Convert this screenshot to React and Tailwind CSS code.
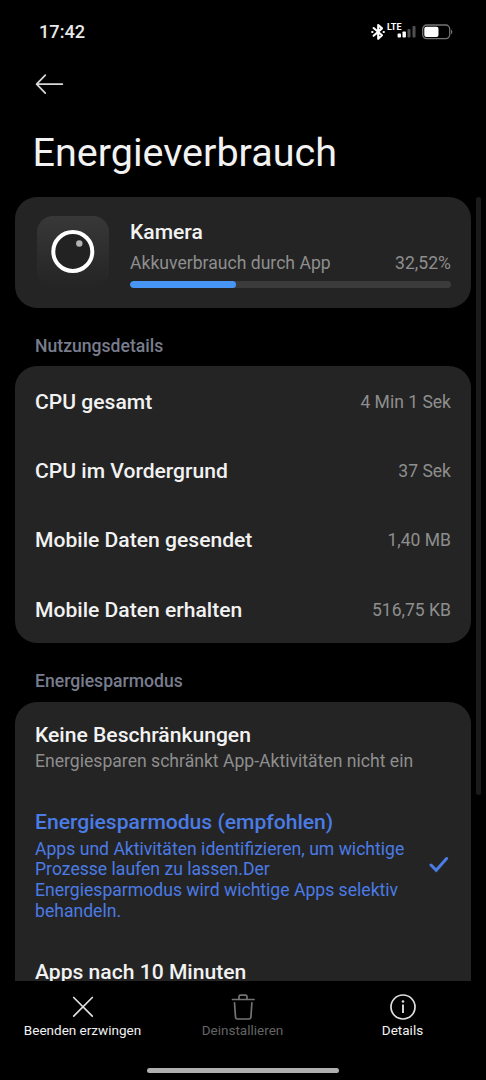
import React from "react";

const usage = [
  ["CPU gesamt", "4 Min 1 Sek"],
  ["CPU im Vordergrund", "37 Sek"],
  ["Mobile Daten gesendet", "1,40 MB"],
  ["Mobile Daten erhalten", "516,75 KB"],
];

function StatusBar() {
  return (
    <header className="flex h-[62px] shrink-0 items-center justify-between pl-[39px] pr-[33px]">
      <span className="pt-[2px] text-[18.2px] leading-none font-medium text-[#e8e8e8]">17:42</span>
      <div className="flex items-center pt-px">
        <svg width="14" height="18" viewBox="0 0 14 18" fill="none" stroke="#fff" strokeWidth="2.1" strokeLinejoin="round" strokeLinecap="round">
          <path d="M2.6 5 L11 12.2 L7.2 15.8 V2 L11 5.4 L2.6 12.8" />
          <path d="M1.2 9h.3M12.6 9h.3" />
        </svg>
        <div className="ml-[2.5px] flex h-[18px] w-[29px] items-start">
          <span className="w-[15px] shrink-0 text-[9px] leading-[9px] font-bold text-white">LTE</span>
          <svg className="-ml-[5px] mt-[2px] shrink-0" width="19" height="13" viewBox="0 0 19 13">
            <rect x="0.6" y="8.6" width="3.4" height="4" rx="0.8" fill="#fff" />
            <rect x="5.5" y="6.5" width="3.4" height="6.1" rx="0.8" fill="#fff" />
            <rect x="10.5" y="4" width="3" height="8.6" rx="0.8" fill="#505050" />
            <rect x="15.5" y="1" width="3" height="11.6" rx="0.8" fill="#505050" />
          </svg>
        </div>
        <svg className="ml-[6px]" width="31" height="16" viewBox="0 0 31 16">
          <rect x="0.7" y="1" width="27" height="13.6" rx="4" fill="none" stroke="#747474" strokeWidth="1.3" />
          <rect x="2.3" y="2.7" width="14.2" height="10.2" rx="2" fill="#fff" />
          <path d="M29 5.5c1.8.8 1.8 4 0 4.8z" fill="#747474" />
        </svg>
      </div>
    </header>
  );
}

function SectionLabel({ children }) {
  return <h2 className="h-[58.5px] pt-[28px] pl-[20px] text-[17.6px] leading-[20px] font-medium text-[#787d8e]">{children}</h2>;
}

function Action({ label, dim, children }) {
  return (
    <button className={dim ? "flex w-[160px] flex-col items-center text-[#646464]" : "flex w-[160px] flex-col items-center text-[#f2f2f2]"}>
      <svg width="28" height="28" viewBox="0 0 28 28" fill="none" stroke={dim ? "#747474" : "#e0e0e0"} strokeWidth="1.7" strokeLinecap="round" strokeLinejoin="round">
        {children}
      </svg>
      <span className="text-[13.5px] leading-[18px] whitespace-nowrap">{label}</span>
    </button>
  );
}

export default function App() {
  return (
    <div className="flex h-[1080px] w-[486px] flex-col overflow-hidden bg-black font-[Roboto,sans-serif] text-[#f2f2f2]">
      <StatusBar />
      <div className="flex h-[44px] shrink-0 items-center pl-[35px]">
        <svg width="29" height="22" viewBox="0 0 29 22" fill="none" stroke="#d8d8d8" strokeWidth="1.7" strokeLinecap="round" strokeLinejoin="round">
          <path d="M27.3 11.2H1.6M10.3 2.2 1.6 11.2l8.7 9" />
        </svg>
      </div>
      <h1 className="h-[91px] shrink-0 pt-[23px] pl-[32.5px] text-[39.5px] leading-[48px] whitespace-nowrap">Energieverbrauch</h1>

      <main className="flex min-h-0 flex-1 justify-between overflow-hidden pr-[5px] pl-[15px]">
        <div className="w-[456px]">
          <section className="flex h-[110.5px] rounded-[22px] bg-[#242424] pt-[19px] pr-[20px] pl-[22px]">
            <div className="flex size-[72px] shrink-0 items-center justify-center rounded-[16px] bg-gradient-to-b from-[#383838] to-[#242424]">
              <svg width="45" height="45" viewBox="0 0 45 45">
                <circle cx="21.8" cy="21.5" r="19.5" fill="#222" stroke="#fff" strokeWidth="4" />
                <circle cx="28.3" cy="13.5" r="3.2" fill="#b4b4b4" />
              </svg>
            </div>
            <div className="ml-[21px] flex-1">
              <div className="mt-[3px] text-[21.1px] leading-[26px] font-medium">Kamera</div>
              <div className="mt-[7px] flex justify-between text-[17.6px] leading-[22px] whitespace-nowrap text-[#8e8e8e]">
                <span>Akkuverbrauch durch App</span>
                <span>32,52%</span>
              </div>
              <div className="mt-[7px] h-[7px] overflow-hidden rounded-full bg-[#3b3b3b]">
                <div className="h-full w-[106px] rounded-full bg-[#4796f6]" />
              </div>
            </div>
          </section>

          <SectionLabel>Nutzungsdetails</SectionLabel>
          <section className="rounded-[22px] bg-[#242424] pr-[20px] pl-[20px]">
            {usage.map(([name, value]) => (
              <div key={name} className="flex h-[69.25px] items-center justify-between pt-[2.5px] whitespace-nowrap">
                <span className="text-[21.1px] leading-[26px] font-medium">{name}</span>
                <span className="text-[17.55px] leading-[22px] text-[#8e8e8e]">{value}</span>
              </div>
            ))}
          </section>

          <SectionLabel>Energiesparmodus</SectionLabel>
          <section className="h-[360px] rounded-t-[22px] bg-[#242424] pt-[20px] pr-[22px] pl-[20px] whitespace-nowrap">
            <div className="text-[21.1px] leading-[26px] font-medium">Keine Beschränkungen</div>
            <div className="mt-[3px] text-[17.6px] leading-[21px] text-[#8e8e8e]">Energiesparen schränkt App-Aktivitäten nicht ein</div>
            <div className="mt-[37px] flex items-center justify-between text-[#4b7be5]">
              <div>
                <div className="text-[21.1px] leading-[26px] font-medium">Energiesparmodus (empfohlen)</div>
                <p className="mt-[4px] text-[17.6px] leading-[20.7px]">
                  Apps und Aktivitäten identifizieren, um wichtige<br />
                  Prozesse laufen zu lassen.Der<br />
                  Energiesparmodus wird wichtige Apps selektiv<br />
                  behandeln.
                </p>
              </div>
              <svg className="shrink-0" width="20" height="18" viewBox="0 0 20 18" fill="none" stroke="#4b7be5" strokeWidth="3" strokeLinecap="round">
                <path d="M2 9 7.2 14.3 17.6 2.500" />
              </svg>
            </div>
            <div className="mt-[37.5px] text-[21.1px] leading-[26px] font-medium">Apps nach 10 Minuten</div>
          </section>
        </div>
        <div className="h-[598px] w-[5px] rounded-full bg-[#1b1b1b]" />
      </main>

      <footer className="h-[99.5px] shrink-0">
        <nav className="flex h-[87px] justify-center pt-[12px] pr-px">
          <Action label="Beenden erzwingen">
            <path d="m4.7 4.5 18.6 18.6M23.3 4.500 4.700 23.100" />
          </Action>
          <Action label="Deinstallieren" dim>
            <path d="M3.500 6.500h21.500M10 6V3.800c0-1 .6-1.600 1.600-1.600h4.800c1 0 1.600.6 1.600 1.600V6M5.500 9.800l1 14.200c.1 1.400.8 2 2 2h11.400c1.200 0 1.900-.6 2-2l1-14.200" />
          </Action>
          <Action label="Details">
            <circle cx="14" cy="14" r="12" />
            <path d="M14 11.500v8.500" strokeLinecap="butt" strokeWidth="1.900" />
            <circle cx="14" cy="8.500" r="1.300" fill="#e0e0e0" stroke="none" />
          </Action>
        </nav>
        <div className="mx-auto h-[5px] w-[192px] rounded-full bg-[#b0b0b0]" />
      </footer>
    </div>
  );
}
